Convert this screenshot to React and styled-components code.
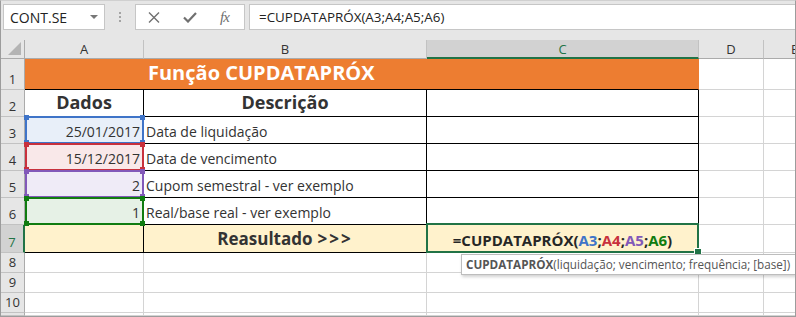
import React from "react";
import styled, { createGlobalStyle } from "styled-components";

const GlobalStyle = createGlobalStyle`
  html, body {
    margin: 0;
    padding: 0;
    background: #ffffff;
  }
  body {
    font-family: "Open Sans", "Noto Sans", sans-serif;
  }
`;

const Frame = styled.div`
  width: 796px;
  height: 317px;
  box-sizing: border-box;
  border: 1px solid #9c9c9c;
  border-top-color: #d0d0d0;
  overflow: hidden;
  background: #e6e6e6;
  display: flex;
  flex-direction: column;
`;

const Toolbar = styled.div`
  display: flex;
  align-items: stretch;
  height: 26px;
  padding: 3px 0 10px 2px;
`;

const NameBox = styled.div`
  width: 102px;
  box-sizing: border-box;
  background: #fff;
  border: 1px solid #c6c6c6;
  display: flex;
  align-items: center;
  justify-content: space-between;
  padding: 0 6px 0 6px;
  font-size: 14px;
  color: #222;
`;

const Caret = styled.span`
  width: 0;
  height: 0;
  border-left: 4px solid transparent;
  border-right: 4px solid transparent;
  border-top: 4px solid #777;
`;

const Grip = styled.div`
  width: 30px;
  display: flex;
  flex-direction: column;
  align-items: center;
  justify-content: center;
  gap: 2px;

  span {
    width: 2px;
    height: 2px;
    background: #a4a4a4;
  }
`;

const ButtonBox = styled.div`
  width: 110px;
  box-sizing: border-box;
  background: #fff;
  border: 1px solid #c6c6c6;
  display: flex;
  align-items: center;
  padding: 0 0 0 12px;
  gap: 23px;
`;

const Fx = styled.span`
  font-family: "Liberation Serif", "DejaVu Serif", serif;
  font-style: italic;
  font-size: 15px;
  color: #6e6e6e;
  letter-spacing: -1px;
`;

const FormulaInput = styled.div`
  flex: 1;
  margin-left: 4px;
  background: #fff;
  border: 1px solid #c6c6c6;
  border-right: none;
  display: flex;
  align-items: center;
  padding-left: 9px;
  font-size: 13.4px;
  color: #222;
`;

const Sheet = styled.div`
  flex: 1;
  display: grid;
  grid-template-columns: 24px 119px 283px 272px 65px 62px;
  grid-template-rows: 19px 31px 27px 27px 27px 27px 27px 28px 20px 20px 20px 1fr;
  background: #fff;
`;

const Corner = styled.div`
  background: #e6e6e6;
  border-right: 1px solid #ababab;
  border-bottom: 1px solid #ababab;
  display: flex;
  align-items: flex-end;
  justify-content: flex-end;
  padding: 0 3px 3px 0;
`;

const ColHeader = styled.div`
  background: ${(p) => (p.$active ? "#d2d2d2" : "#e6e6e6")};
  color: ${(p) => (p.$active ? "#217346" : "#333")};
  border-right: 1px solid #c2c2c2;
  border-bottom: ${(p) => (p.$active ? "2px solid #217346" : "1px solid #ababab")};
  display: flex;
  align-items: center;
  justify-content: center;
  font-size: 13px;
`;

const RowHeader = styled.div`
  background: ${(p) => (p.$active ? "#d2d2d2" : "#e6e6e6")};
  color: ${(p) => (p.$active ? "#217346" : "#333")};
  border-right: ${(p) => (p.$active ? "2px solid #217346" : "1px solid #ababab")};
  border-bottom: 1px solid #c2c2c2;
  display: flex;
  align-items: flex-end;
  justify-content: center;
  padding-bottom: 1px;
  font-size: 13px;
`;

const Cell = styled.div`
  position: relative;
  grid-column: ${(p) => (p.$span ? `span ${p.$span}` : "auto")};
  background: ${(p) => p.$bg || "#fff"};
  border-right: 1px solid ${(p) => p.$rb || "#d4d4d4"};
  border-bottom: 1px solid ${(p) => p.$bb || "#d4d4d4"};
  display: flex;
  align-items: flex-end;
  justify-content: ${(p) => p.$align || "flex-start"};
  padding: 0 ${(p) => (p.$align === "flex-end" ? "3px" : "2px")} 2px 2px;
  font-size: ${(p) => p.$size || 14}px;
  font-weight: ${(p) => (p.$bold ? 700 : 400)};
  color: ${(p) => p.$color || "#333"};
  white-space: nowrap;
  overflow: visible;
`;

const Title = styled.span`
  font-size: 20px;
  font-weight: 700;
  color: #fff;
  padding-left: 121px;
  line-height: 28px;
`;

const Arrows = styled.span`
  letter-spacing: 2px;
  margin-left: 5px;
`;

const RefBox = styled.div`
  position: absolute;
  top: -1px;
  left: 0;
  right: -1px;
  bottom: -1px;
  border: 2px solid ${(p) => p.$color};
  box-sizing: border-box;
  z-index: ${(p) => p.$z};
  pointer-events: none;
`;

const Knob = styled.span`
  position: absolute;
  width: 5px;
  height: 5px;
  background: ${(p) => p.$color};
  ${(p) => (p.$top ? "top: -3px;" : "bottom: -3px;")}
  ${(p) => (p.$left ? "left: -3px;" : "right: -3px;")}
`;

const Selection = styled.div`
  position: absolute;
  top: -2px;
  left: -1px;
  right: -1px;
  bottom: -1px;
  border: 2px solid #217346;
  z-index: 5;
  pointer-events: none;
`;

const FillHandle = styled.span`
  position: absolute;
  right: -5px;
  bottom: -5px;
  width: 6px;
  height: 6px;
  background: #217346;
  border: 1px solid #fff;
`;

const Ref = styled.span`
  color: ${(p) => p.$color};
`;

const Tooltip = styled.div`
  position: absolute;
  left: 34px;
  top: 29px;
  z-index: 10;
  background: #fff;
  border: 1px solid #bdbdbd;
  box-shadow: 1px 2px 3px rgba(0, 0, 0, 0.18);
  padding: 1px 5px 2px 4px;
  font-size: 11.7px;
  font-weight: 400;
  color: #555;

  b {
    font-weight: 700;
    color: #555;
  }
`;

const refs = [
  { value: "25/01/2017", desc: "Data de liquidação", bg: "#e8eff9", color: "#3f74c8" },
  { value: "15/12/2017", desc: "Data de vencimento", bg: "#f9e8e9", color: "#c8313d" },
  { value: "2", desc: "Cupom semestral - ver exemplo", bg: "#efebf7", color: "#8259b9" },
  { value: "1", desc: "Real/base real - ver exemplo", bg: "#e6f1e6", color: "#107c10" },
];

const CancelIcon = () => (
  <svg width="12" height="11" viewBox="0 0 12 11">
    <path d="M1 0.5 L11 10.5 M11 0.5 L1 10.5" stroke="#707070" strokeWidth="1.4" fill="none" />
  </svg>
);

const CheckIcon = () => (
  <svg width="14" height="11" viewBox="0 0 14 11">
    <path d="M1 5.5 L5 9.5 L13 1" stroke="#707070" strokeWidth="2.2" fill="none" />
  </svg>
);

const CornerTriangle = () => (
  <svg width="13" height="13" viewBox="0 0 13 13">
    <polygon points="13,0 13,13 0,13" fill="#b4b4b4" />
  </svg>
);

const RefCorners = ({ color }) => (
  <>
    <Knob $color={color} $top $left />
    <Knob $color={color} $top />
    <Knob $color={color} $left />
    <Knob $color={color} />
  </>
);

const Blank = ({ n }) =>
  Array.from({ length: n }).map((_, i) => <Cell key={i} />);

export default function App() {
  const black = "#000";
  return (
    <>
      <GlobalStyle />
      <Frame>
        <Toolbar>
          <NameBox>
            CONT.SE
            <Caret />
          </NameBox>
          <Grip>
            <span />
            <span />
            <span />
          </Grip>
          <ButtonBox>
            <CancelIcon />
            <CheckIcon />
            <Fx>fx</Fx>
          </ButtonBox>
          <FormulaInput>=CUPDATAPRÓX(A3;A4;A5;A6)</FormulaInput>
        </Toolbar>

        <Sheet>
          <Corner>
            <CornerTriangle />
          </Corner>
          <ColHeader>A</ColHeader>
          <ColHeader>B</ColHeader>
          <ColHeader $active>C</ColHeader>
          <ColHeader>D</ColHeader>
          <ColHeader>E</ColHeader>

          <RowHeader>1</RowHeader>
          <Cell $span={3} $bg="#ed7d31" $rb="#ed7d31" $bb={black}>
            <Title>Função CUPDATAPRÓX</Title>
          </Cell>
          <Blank n={2} />

          <RowHeader>2</RowHeader>
          <Cell $align="center" $bold $size={18} $rb={black} $bb={black}>
            Dados
          </Cell>
          <Cell $align="center" $bold $size={18} $rb={black} $bb={black}>
            Descrição
          </Cell>
          <Cell $rb={black} $bb={black} />
          <Blank n={2} />

          {refs.map((r, i) => (
            <React.Fragment key={r.value + i}>
              <RowHeader>{i + 3}</RowHeader>
              <Cell $align="flex-end" $bg={r.bg} $rb={black} $bb={black}>
                {r.value}
                <RefBox $color={r.color} $z={i + 1}>
                  <RefCorners color={r.color} />
                </RefBox>
              </Cell>
              <Cell $rb={black} $bb={black}>
                {r.desc}
              </Cell>
              <Cell $rb={black} $bb={black} />
              <Blank n={2} />
            </React.Fragment>
          ))}

          <RowHeader $active>7</RowHeader>
          <Cell $bg="#fff2cc" $rb={black} $bb={black} />
          <Cell $align="center" $bold $size={17} $bg="#fff2cc" $rb={black} $bb={black}>
            Reasultado<Arrows>&gt;&gt;&gt;</Arrows>
          </Cell>
          <Cell $align="center" $bold $size={15} $bg="#fff2cc" $rb={black} $bb={black} $color="#262626">
            =CUPDATAPRÓX(<Ref $color="#3f74c8">A3</Ref>;<Ref $color="#c8313d">A4</Ref>;
            <Ref $color="#8259b9">A5</Ref>;<Ref $color="#107c10">A6</Ref>)
            <Selection>
              <FillHandle />
            </Selection>
            <Tooltip>
              <b>CUPDATAPRÓX</b>(liquidação; vencimento; frequência; [base])
            </Tooltip>
          </Cell>
          <Blank n={2} />

          {[8, 9, 10, ""].map((n) => (
            <React.Fragment key={n}>
              <RowHeader>{n}</RowHeader>
              <Blank n={5} />
            </React.Fragment>
          ))}
        </Sheet>
      </Frame>
    </>
  );
}
